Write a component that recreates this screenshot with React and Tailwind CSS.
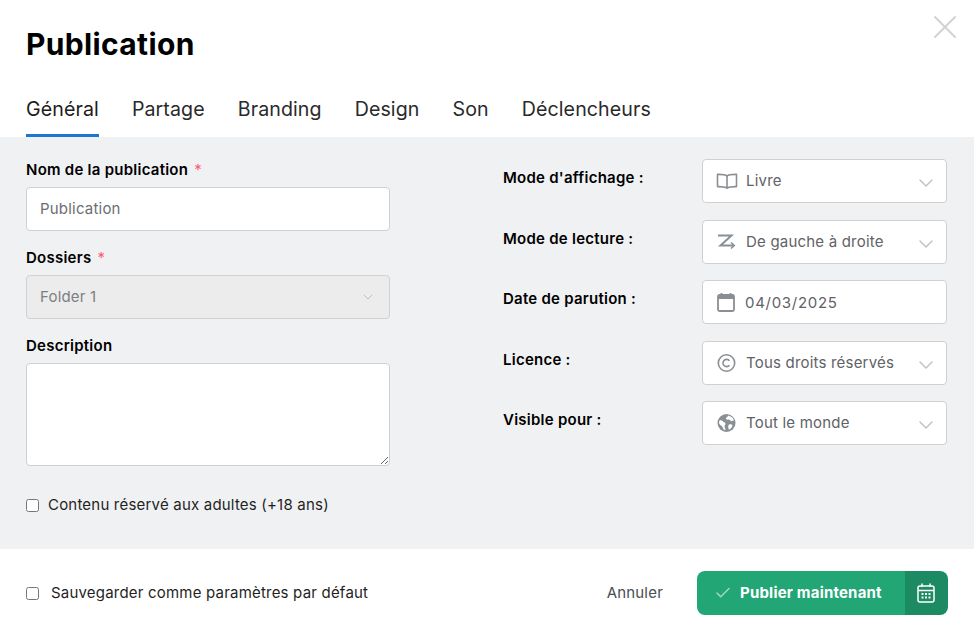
import { X, ChevronDown, Check } from "lucide-react";

const tabs = ["Général", "Partage", "Branding", "Design", "Son", "Déclencheurs"];

const BookIcon = () => (
  <svg width="22" height="22" viewBox="0 0 22 22" fill="none" stroke="#8a8f94" strokeWidth="1.6" strokeLinejoin="round">
    <path d="M11 6C9.400 4.600 7 4.300 1.500 4.400V16.600C7 16.500 9.400 16.800 11 18.200C12.600 16.800 15 16.500 20.500 16.600V4.400C15 4.300 12.600 4.600 11 6Z" />
    <path d="M11 6V18.200" />
  </svg>
);

const ReadIcon = () => (
  <svg width="22" height="22" viewBox="0 0 22 22" fill="none" stroke="#8a8f94" strokeWidth="2">
    <path d="M2 4.500H15.500L4.500 14.500H17.500" />
    <path d="M15 11.500L18.300 14.500L15 17.500" strokeWidth="1.600" />
  </svg>
);

const CalendarIcon = () => (
  <svg width="20" height="22" viewBox="0 0 20 22" fill="none">
    <rect x="2" y="4" width="16" height="16" rx="1.500" stroke="#8a8f94" strokeWidth="1.800" />
    <path d="M2 5.500C2 4.500 2.500 4 3.500 4H16.500C17.500 4 18 4.500 18 5.500V8H2Z" fill="#8a8f94" />
    <path d="M5.500 2V5M14.500 2V5" stroke="#8a8f94" strokeWidth="1.800" />
  </svg>
);

const CopyrightIcon = () => (
  <svg width="22" height="22" viewBox="0 0 22 22" fill="none" stroke="#8a8f94" strokeWidth="1.600">
    <circle cx="10.500" cy="11" r="8.200" />
    <path d="M13.400 8.800A3.600 3.600 0 1 0 13.400 13.200" />
  </svg>
);

const GlobeIcon = () => (
  <svg width="22" height="22" viewBox="0 0 22 22">
    <circle cx="10.500" cy="11" r="9" fill="#8a8f94" />
    <path d="M3.500 8.500C5 8 6 8.500 7 9.500C8 10.500 9.500 10.500 9.500 12C9.500 13 8.500 13 8.500 14.500C8.500 15.500 9.500 16 9.500 18L7.500 17.500C7 15.500 6.500 14.500 5 13.500C4 12.800 3 12 3 10.500Z M12 3.500C12 5 10.500 5 10 6C9.500 7 11 8 12.500 7.500C13.500 7.200 14 8.500 15 9C16 9.500 17.300 8.500 18 8.500C17.300 6 15 4 12 3.500Z M13 12.500C14.500 12 16 12.500 16.500 13.500C16 15.500 14.500 17 13 17.800C12.500 16.500 11.500 14 13 12.500Z" fill="#ffffff" />
  </svg>
);

const ButtonCalendar = () => (
  <svg width="20" height="20" viewBox="0 0 20 20" fill="none" stroke="#ffffff" strokeWidth="1.500" className="-ml-px">
    <rect x="2" y="3" width="16" height="16" rx="2" />
    <path d="M2 7.500H18M6 0.500V4M14 0.500V4" />
    <path d="M5.500 11H7.500M9 11H11M12.500 11H14.500M5.500 14.500H7.500M9 14.500H11M12.500 14.500H14.500" strokeWidth="1.800" />
  </svg>
);

function Label({ children, required }) {
  return (
    <div className="text-[15px] leading-[22px] font-semibold tracking-[0.25px] text-black">
      {children}
      {required && <span className="ml-[6px] font-normal text-[#ff5c6c]">*</span>}
    </div>
  );
}

function SelectRow({ label, icon, value, arrow = true }) {
  return (
    <div className="flex items-start">
      <div className="w-[199px] pt-[9px] text-[15px] leading-5 font-semibold tracking-[0.25px] text-black">{label}</div>
      <div className="flex h-11 w-[245px] items-center rounded border border-[#cfd0d2] bg-white pl-[13px] pr-[8px]">
        <div className="flex w-[30px] shrink-0 items-center">{icon}</div>
        <div className={"flex-1 text-[15px] leading-5 text-[#5f6266] " + (arrow ? "" : "-ml-px pt-[2px] tracking-[0.7px]")}>{value}</div>
        {arrow && <ChevronDown size={24} strokeWidth={1.5} className="mt-1 text-[#c0c3c6]" />}
      </div>
    </div>
  );
}

export default function App() {
  return (
    <div className="relative h-[630px] w-[974px] overflow-hidden bg-white font-['Inter',sans-serif] tracking-[0.2px]">
      <button className="absolute right-[9px] top-[7px] text-[#d0d2d4]">
        <X size={40} strokeWidth={1.2} />
      </button>

      <div className="h-[137px] px-[26px]">
        <h1 className="pt-[25px] text-[30px] leading-[38px] font-bold tracking-[0.35px] text-black">Publication</h1>
        <div className="mt-[21px] flex gap-[33px]">
          {tabs.map((t, i) => (
            <div
              key={t}
              className={
                "h-[53px] pt-[13px] text-[19.6px] leading-6 tracking-[0.1px] " +
                (i === 0 ? "border-b-[3px] border-[#1a76d2] text-[#1c1c1c]" : "text-[#2a2a2a]")
              }
            >
              {t}
            </div>
          ))}
        </div>
      </div>

      <div className="flex h-[412px] bg-[#f0f1f3] pl-[26px] pt-[22px]">
        <div className="w-[364px]">
          <Label required>Nom de la publication</Label>
          <input
            placeholder="Publication"
            className="mt-[6px] h-11 w-full rounded border border-[#cfd0d2] bg-white px-[13px] pb-[2px] text-[15px] text-[#5f6266] placeholder:text-[#6b6e72] focus:outline-none"
          />
          <div className="mt-[16px]">
            <Label required>Dossiers</Label>
          </div>
          <div className="mt-[6px] flex h-11 items-center justify-between rounded border border-[#cfd0d2] bg-[#ececec] px-[13px]">
            <span className="text-[15px] text-[#7c7f83]">Folder 1</span>
            <ChevronDown size={16} strokeWidth={1.5} className="text-[#bcbec1]" />
          </div>
          <div className="mt-[16px]">
            <Label>Description</Label>
          </div>
          <textarea className="mt-[6px] block h-[103px] w-full rounded border border-[#cfd0d2] bg-white focus:outline-none" />
          <label className="mt-[29px] flex items-center text-[15px] leading-5 text-[#1f1f1f]">
            <input type="checkbox" className="m-0 h-[13px] w-[13px]" />
            <span className="ml-[9px]">Contenu réservé aux adultes (+18 ans)</span>
          </label>
        </div>

        <div className="ml-[113px] flex w-[444px] flex-col gap-[16.5px]">
          <SelectRow label="Mode d'affichage :" icon={<BookIcon />} value="Livre" />
          <SelectRow label="Mode de lecture :" icon={<ReadIcon />} value="De gauche à droite" />
          <SelectRow label="Date de parution :" icon={<CalendarIcon />} value="04/03/2025" arrow={false} />
          <SelectRow label="Licence :" icon={<CopyrightIcon />} value="Tous droits réservés" />
          <SelectRow label="Visible pour :" icon={<GlobeIcon />} value="Tout le monde" />
        </div>
      </div>

      <div className="flex h-[81px] items-center pl-[26px] pr-[26px] pt-[7px]">
        <label className="flex items-center text-[15px] text-[#1f1f1f]">
          <input type="checkbox" className="m-0 h-[13px] w-[13px]" />
          <span className="ml-3">Sauvegarder comme paramètres par défaut</span>
        </label>
        <button className="ml-auto mr-[34px] text-[15px] text-[#4a4d52]">Annuler</button>
        <div className="flex h-11 w-[251px] overflow-hidden rounded-lg text-white">
          <button className="flex flex-1 items-center bg-[#22a675] pl-[17px] text-[15px] font-bold">
            <Check size={18} strokeWidth={2} className="mr-2 text-[#9fd8c2]" />
            Publier maintenant
          </button>
          <div className="flex w-[43px] items-center justify-center bg-[#1c8a62]">
            <ButtonCalendar />
          </div>
        </div>
      </div>
    </div>
  );
}
